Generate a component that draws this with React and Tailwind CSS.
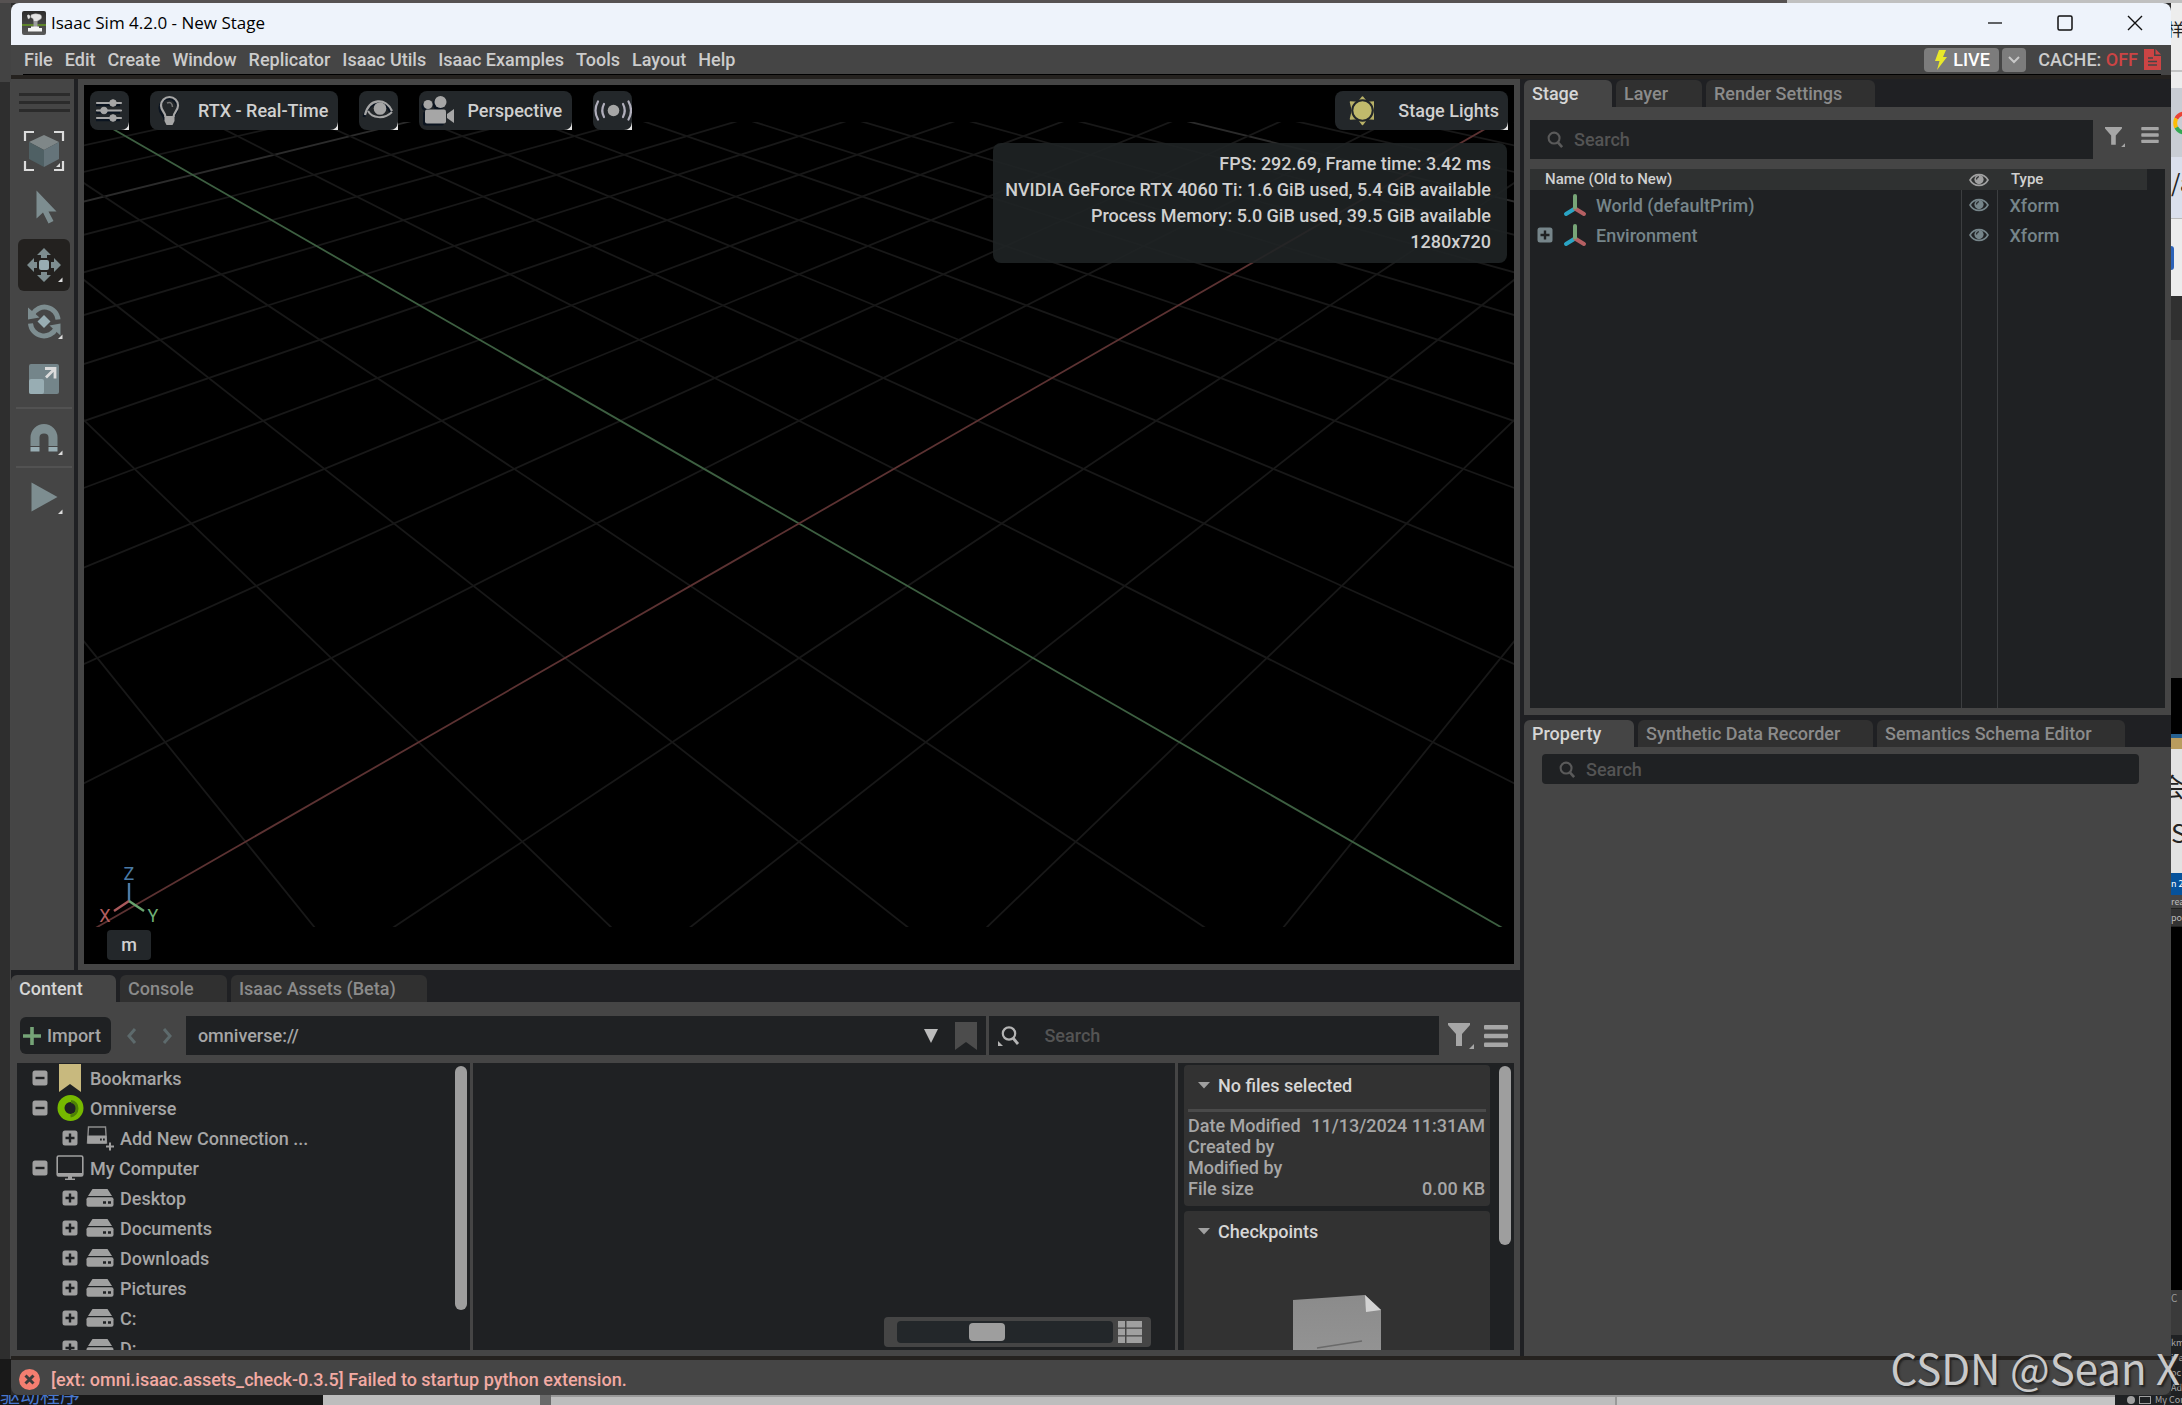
import clsx from 'clsx'

const MENUS = ['File', 'Edit', 'Create', 'Window', 'Replicator', 'Isaac Utils', 'Isaac Examples', 'Tools', 'Layout', 'Help']

const TREE = [
  { label: 'Bookmarks', icon: 'bookmark', open: true },
  { label: 'Omniverse', icon: 'omniverse', open: true },
  { label: 'Add New Connection ...', icon: 'connection', child: true },
  { label: 'My Computer', icon: 'computer', open: true },
  { label: 'Desktop', icon: 'drive', child: true },
  { label: 'Documents', icon: 'drive', child: true },
  { label: 'Downloads', icon: 'drive', child: true },
  { label: 'Pictures', icon: 'drive', child: true },
  { label: 'C:', icon: 'drive', child: true },
  { label: 'D:', icon: 'drive', child: true },
]

const FILE_INFO = [
  ['Date Modified', '11/13/2024 11:31AM'],
  ['Created by', ''],
  ['Modified by', ''],
  ['File size', '0.00 KB'],
]

const STATS = [
  'FPS: 292.69, Frame time: 3.42 ms',
  'NVIDIA GeForce RTX 4060 Ti: 1.6 GiB used, 5.4 GiB available',
  'Process Memory: 5.0 GiB used, 39.5 GiB available',
  '1280x720',
]

/* ---------- icons ---------- */

function AppIcon() {
  return (
    <svg className="h-6 w-6 shrink-0" viewBox="0 0 24 24">
      <defs>
        <linearGradient id="app" x1="0" y1="0" x2="0" y2="1">
          <stop offset="0" stopColor="#2c2c2c" />
          <stop offset="1" stopColor="#5a5a5a" />
        </linearGradient>
      </defs>
      <rect width="24" height="24" rx="2" fill="url(#app)" />
      <path d="M0 14h24" stroke="#6fae1a" strokeWidth="1.200" />
      <path d="M5 4.500q2-1.500 3 .5t-2 3M9 4q4-2 9-.5c2 1 2 4 0 5l-2 1-1 1h-3l-1-3-2-1z" fill="#e4e4e4" stroke="#bbb" strokeWidth=".5" />
      <path d="M11.500 10h4v6h-4z" fill="#9d9d9d" />
      <path d="M6 17h14v3.500H6zM9 15.500h8V17H9z" fill="#f4f4f4" />
    </svg>
  )
}

function SearchIcon({ className }) {
  return (
    <svg className={className} viewBox="0 0 18 18" fill="none" stroke="currentColor" strokeWidth="2.200">
      <circle cx="7.500" cy="7.500" r="5.800" />
      <path d="M11.500 12l4.500 5" strokeWidth="2.800" />
    </svg>
  )
}

function FilterIcon({ className }) {
  return (
    <svg className={className} viewBox="0 0 26 26" fill="currentColor">
      <path d="M0 0h22v2l-8 9v12H8V11L0 2z" />
      <path d="M26 21v5h-5z" />
    </svg>
  )
}

function ListIcon({ className }) {
  return (
    <svg className={className} viewBox="0 0 24 22" fill="currentColor">
      <rect width="24" height="4.500" rx="1" />
      <rect y="8.750" width="24" height="4.500" rx="1" />
      <rect y="17.500" width="24" height="4.500" rx="1" />
    </svg>
  )
}

function EyeIcon() {
  return (
    <svg className="mx-auto h-4 w-5" viewBox="0 0 20 16">
      <path d="M1 8C5 .8 15 .8 19 8c-4 7.200-14 7.200-18 0z" fill="none" stroke="currentColor" strokeWidth="1.600" />
      <circle cx="10" cy="7.600" r="4.600" fill="currentColor" />
      <path d="M7.600 7.400q0-2.400 2.400-2.600" stroke="#1f2123" strokeWidth="1.100" fill="none" />
    </svg>
  )
}

function XformIcon() {
  return (
    <svg className="h-6 w-6 shrink-0" viewBox="0 0 24 24" fill="none" strokeWidth="4" strokeLinecap="round">
      <path d="M12 15.500l-9 5.500" stroke="#2aa4c4" />
      <path d="M12 15.500l9 5.500" stroke="#b56063" />
      <path d="M12 14.500V3" stroke="#77a577" />
    </svg>
  )
}

function ExpandIcon({ open, className }) {
  return (
    <svg className={clsx('h-4 w-4 shrink-0', className)} viewBox="0 0 16 16">
      <rect x=".5" y=".5" width="15" height="15" rx="2.500" fill="currentColor" />
      <path d={open ? 'M3.500 8h9' : 'M3.500 8h9M8 3.500v9'} stroke="#1f2123" strokeWidth="2.400" />
    </svg>
  )
}

function TreeIcon({ name }) {
  if (name === 'bookmark') {
    return (
      <svg className="h-7 w-7 shrink-0" viewBox="0 0 28 28">
        <path d="M3 0h22v28l-11-8-11 8z" fill="#c8b97e" />
      </svg>
    )
  }
  if (name === 'omniverse') {
    return (
      <svg className="h-7 w-7 shrink-0" viewBox="0 0 28 28" fill="none">
        <circle cx="14.500" cy="14" r="9.500" stroke="#76b900" strokeWidth="7" />
        <path d="M15 7.500a6.500 6.500 0 0 1 6 7c0 4-3 7-6.500 7.500" stroke="#4c7f06" strokeWidth="3" />
      </svg>
    )
  }
  if (name === 'connection') {
    return (
      <svg className="h-7 w-7 shrink-0" viewBox="0 0 28 28">
        <path d="M2.500 3h17l1 16h-19z" fill="none" stroke="#8d8d8d" strokeWidth="1.400" />
        <rect x="1.500" y="11.500" width="19" height="8" rx="1" fill="#a0a0a0" />
        <path d="M14 15.500h1.800M17 15.500h1.800" stroke="#1f2123" strokeWidth="2" />
        <path d="M20 22.500h8M24 18.500v8" stroke="#a0a0a0" strokeWidth="2" />
      </svg>
    )
  }
  if (name === 'computer') {
    return (
      <svg className="h-7 w-7 shrink-0" viewBox="0 0 28 28">
        <rect x="1.200" y="2" width="25.600" height="20" rx="1.500" fill="none" stroke="#a0a0a0" strokeWidth="1.600" />
        <path d="M1 19h26v3H1z" fill="#a0a0a0" />
        <path d="M12 22h4v2.500h3V26H9v-1.500h3z" fill="#a0a0a0" />
      </svg>
    )
  }
  return (
    <svg className="h-7 w-7 shrink-0" viewBox="0 0 28 28" fill="#a0a0a0">
      <path d="M6.500 5h15l4.500 7H2z" />
      <rect x=".5" y="13.200" width="27" height="9.500" rx="2" />
      <path d="M17 17.200h3v2.600h-3zM22 17.200h3v2.600h-3z" fill="#1f2123" />
    </svg>
  )
}

function Corner() {
  return (
    <svg className="absolute right-0 bottom-0 h-2 w-2" viewBox="0 0 8 8">
      <path d="M8 0v8H0q7 0 8-8z" fill="#e2e2e2" />
    </svg>
  )
}

/* ---------- left tool bar ---------- */

function Tool({ label, active, notch, children }) {
  return (
    <button type="button" aria-label={label} className="flex h-[57px] w-full items-center justify-center">
      <span className={clsx('flex h-[52px] w-[52px] items-center justify-center rounded-md', active && 'bg-[#23211f]')}>
        <svg className="h-[52px] w-[52px]" viewBox="0 0 52 52">
          {children}
          {notch && <path d="M44.500 38.500v4.500h-4.500z" fill="#dcdcdc" />}
        </svg>
      </span>
    </button>
  )
}

function ToolBar() {
  return (
    <div className="flex w-[63px] shrink-0 flex-col items-center bg-[#454545] pt-3.5 pl-[3px]">
      <div className="mb-3 flex w-[51px] flex-col gap-[5px]">
        <div className="h-[3px] bg-[#2b2b2b]" />
        <div className="h-[3px] bg-[#2b2b2b]" />
        <div className="h-[3px] bg-[#2b2b2b]" />
      </div>
      <div className="-mt-0.5 w-full">
        <Tool label="Select mode">
          <g fill="none" stroke="#dcdcdc" strokeWidth="2.200">
            <path d="M7 16V7h9M36 7h9v9M16 45H7v-9M36 45h9v-9" />
          </g>
          <path d="M26 10l15 7-15 8-15-8z" fill="#7f8788" />
          <path d="M11 17l15 8v17l-15-8z" fill="#4f6064" />
          <path d="M41 17l-15 8v17l15-8z" fill="#65747a" />
          <path d="M42 38v4h-4z" fill="#dcdcdc" />
        </Tool>
        <Tool label="Select">
          <path d="M18.500 8.500v28l6.500-6 5.500 11 5-2.500-5-9.500h8z" fill="#7d8d90" />
        </Tool>
        <Tool label="Move" active notch>
          <rect x="21" y="21" width="10" height="10" rx="2" fill="#98adb3" />
          <g fill="#7d8d90">
            <path d="M26 9l7 7h-4v3h-6v-3h-4z" />
            <path d="M26 43l7-7h-4v-3h-6v3h-4z" />
            <path d="M9 26l7-7v4h3v6h-3v4z" />
            <path d="M43 26l-7-7v4h-3v6h3v4z" />
          </g>
        </Tool>
        <Tool label="Rotate" notch>
          <path d="M26 19l6.500 6.500-6.500 6.500-6.500-6.500z" fill="#98adb3" />
          <path d="M14.500 18.500a13.500 13.500 0 0 1 25.500 5" fill="none" stroke="#7d8d90" strokeWidth="5" />
          <path d="M38 32.500a13.500 13.500 0 0 1-25.500-5" fill="none" stroke="#7d8d90" strokeWidth="5" />
          <path d="M10 11.500v12l11.500-2zM42.500 27.500v12l-11-10z" fill="#7d8d90" />
        </Tool>
        <Tool label="Scale">
          <rect x="11" y="11" width="30" height="30" rx="2" fill="#74858a" />
          <rect x="11" y="26" width="15" height="15" rx="2" fill="#98adb3" />
          <path d="M27 15.500h10v10M37 15.500l-9 9" fill="none" stroke="#dcdcdc" strokeWidth="2.800" />
        </Tool>
        <div className="mx-auto h-0.5 w-14 bg-[#525252]" />
        <Tool label="Snap" notch>
          <path d="M12.500 34V25.500a13.500 13.500 0 0 1 27 0V34h-9v-8.500q0-4-4.500-4t-4.500 4V34z" fill="#7d8d90" />
          <path d="M12.500 35h9v4.500h-9zM30.500 35h9v4.500h-9z" fill="#98adb3" />
        </Tool>
        <div className="mx-auto h-0.5 w-14 bg-[#525252]" />
        <Tool label="Play" notch>
          <path d="M13.500 11.500v29l26-14.500z" fill="#7d8d90" />
        </Tool>
      </div>
    </div>
  )
}

/* ---------- viewport ---------- */

// Ground plane projection: u and v are the red and green axes in grid units.
function project(u, v) {
  const s = (u + v) / 2
  const t = (u - v) / 2
  const depth = 7.46 - s
  return [715 + (1511 * t) / depth, -467.6 + 6482 / depth]
}

function GroundGrid() {
  const lines = []
  for (let n = -26; n <= 18; n++) {
    if (n === 0) continue
    lines.push({ n, a: project(n, -30), b: project(n, 9 - n) })
    lines.push({ n, a: project(-30, n), b: project(9 - n, n) })
  }
  const axisU = [project(-30, 0), project(9, 0)]
  const axisV = [project(0, -30), project(0, 9)]

  return (
    <svg className="aspect-video w-full" viewBox="0 0 1430 804">
      {lines.map(({ n, a, b }, i) => (
        <line
          key={i}
          x1={a[0]}
          y1={a[1]}
          x2={b[0]}
          y2={b[1]}
          stroke={n % 10 === 0 ? '#2b2b2b' : '#181818'}
          strokeWidth="1.800"
        />
      ))}
      <line x1={axisU[0][0]} y1={axisU[0][1]} x2={axisU[1][0]} y2={axisU[1][1]} stroke="#3d5f41" strokeWidth="1.800" />
      <line x1={axisV[0][0]} y1={axisV[0][1]} x2={axisV[1][0]} y2={axisV[1][1]} stroke="#5c3232" strokeWidth="1.800" />
    </svg>
  )
}

function ViewButton({ label, text, className, children }) {
  return (
    <button
      type="button"
      aria-label={label}
      className={clsx('relative flex h-[39px] items-center rounded-lg bg-[#23272a] text-[18px] font-medium text-[#d0d0d0]', className)}
    >
      <svg className="h-[39px] w-[39px] shrink-0" viewBox="0 0 39 39">
        {children}
      </svg>
      {text}
      <Corner />
    </button>
  )
}

function Viewport() {
  return (
    <div className="relative flex min-h-0 flex-1 flex-col justify-center overflow-hidden bg-black">
      <GroundGrid />

      <div className="absolute inset-x-1.5 top-1.5 flex items-start">
        <ViewButton label="Viewport settings">
          <g stroke="#0b1420" strokeWidth="2.500" transform="translate(-1 2)">
            <path d="M7 12h24M7 19.500h24M7 27h24" />
          </g>
          <g fill="#a6a6a6" stroke="#a6a6a6">
            <path d="M7 12h24M7 19.500h24M7 27h24" strokeWidth="2.200" strokeLinecap="round" />
            <circle cx="23" cy="12" r="3.300" />
            <circle cx="14" cy="19.500" r="3.300" />
            <circle cx="23" cy="27" r="3.300" />
          </g>
        </ViewButton>
        <ViewButton label="Renderer" text="RTX - Real-Time" className="ml-[21px] gap-[9px] pr-2.5">
          <path d="M14 27c0-5-5-6-5-12a9 9 0 0 1 18 0c0 6-5 7-5 12" transform="translate(.5 2)" fill="none" stroke="#0b1420" strokeWidth="2.200" />
          <path d="M15.500 26c0-5-4.500-6-4.500-11.500a8.500 8.500 0 0 1 17 0c0 5.500-4.500 6.500-4.500 11.500" fill="none" stroke="#a6a6a6" strokeWidth="2.200" />
          <path d="M14.500 25h10v5l-2 4h-6l-2-4z" fill="#a6a6a6" />
          <path d="M17 12q5-2 5.500 4" fill="none" stroke="#777" strokeWidth="1.500" />
        </ViewButton>
        <ViewButton label="Show by type" className="ml-[21px]">
          <path d="M5 26C9 9 26 9 32 21" fill="none" stroke="#0b1420" strokeWidth="3" />
          <circle cx="21" cy="17.500" r="6.300" fill="#a6a6a6" />
          <path d="M6 24C10 7 27 6 33 20" fill="none" stroke="#a6a6a6" strokeWidth="2.200" />
          <path d="M9 20c4 7 16 9 24 1" fill="none" stroke="#a6a6a6" strokeWidth="2" />
        </ViewButton>
        <ViewButton label="Camera" text="Perspective" className="ml-[21px] gap-[9px] pr-2.5">
          <g fill="#0b1420" transform="translate(-2 2)">
            <circle cx="9" cy="13.500" r="4.600" />
            <circle cx="21.500" cy="11" r="6" />
            <rect x="6" y="18.500" width="21" height="14" rx="2" />
          </g>
          <g fill="#a6a6a6">
            <circle cx="9" cy="13.500" r="4.600" />
            <circle cx="21.500" cy="11" r="6" />
            <rect x="6" y="18.500" width="21" height="14" rx="2" />
            <path d="M35 18v14l-7-5v-4z" />
          </g>
        </ViewButton>
        <ViewButton label="Sensors" className="ml-[21px]">
          <circle cx="20.500" cy="19.500" r="5.800" fill="#a6a6a6" />
          <g fill="none" stroke="#b0aebb" strokeWidth="2.200" strokeLinecap="round">
            <path d="M11 13q-3.500 6.500 0 13M30 13q3.500 6.500 0 13" />
            <path d="M5 10.500q-5 9 0 18M35.500 10.500q5 9 0 18" />
          </g>
        </ViewButton>
        <ViewButton label="Lighting" text="Stage Lights" className="ml-auto gap-[24px] pr-[9px]">
          <path
            d="M27.500 6l4.500 5.500 7.500-.5-2 8.500 2 8.500-7.500-.5-4.500 6-4.500-6-7.500.5 2-8.500-2-8.500 7.500.5z"
            fill="#b9b268"
            stroke="#b9b268"
            strokeWidth="1.500"
            strokeLinejoin="round"
          />
          <circle cx="27.500" cy="19.500" r="10.200" fill="#c1ba6c" stroke="#23272a" strokeWidth="2" />
        </ViewButton>
      </div>

      <div className="absolute top-[58px] right-[7px] rounded-lg bg-[#1f2325]/90 py-2 pr-4 pl-3 text-right text-[18px] leading-[26px] font-medium text-[#d0d0d0]">
        {STATS.map((line) => (
          <div key={line}>{line}</div>
        ))}
      </div>

      <div className="absolute bottom-1 left-[11px] flex w-[68px] flex-col items-center">
        <svg className="h-[66px] w-[68px] overflow-visible font-['Roboto',sans-serif] text-[18px]" viewBox="0 0 68 66">
          <path d="M34 38V19" stroke="#4a7aa5" strokeWidth="2.400" />
          <path d="M34 37l-15 10" stroke="#a9595b" strokeWidth="2.400" />
          <path d="M34 37l15 10" stroke="#69a36d" strokeWidth="2.400" />
          <text x="34" y="16" textAnchor="middle" fill="#4a7aa5">Z</text>
          <text x="10" y="58" textAnchor="middle" fill="#b25d5e">X</text>
          <text x="58" y="58" textAnchor="middle" fill="#6fae74">Y</text>
        </svg>
        <button type="button" className="h-[30px] w-11 rounded bg-[#23272a] text-[18px] leading-[30px] font-medium text-[#d0d0d0]">
          m
        </button>
      </div>
    </div>
  )
}

/* ---------- shared ---------- */

function Tabs({ items, className = 'h-8' }) {
  return (
    <div role="tablist" className={clsx('flex shrink-0 items-end gap-1 bg-[#1f2023]', className)}>
      {items.map(([label, width], i) => (
        <button
          key={label}
          type="button"
          role="tab"
          aria-selected={i === 0}
          className={clsx(
            'h-[27px] rounded-t-md pl-2 text-left text-[18px] leading-[28px] font-medium whitespace-nowrap',
            width,
            i === 0 ? 'bg-[#454545] text-[#d6d6d6]' : 'bg-[#303030] text-[#8b8b8b]',
          )}
        >
          {label}
        </button>
      ))}
    </div>
  )
}

/* ---------- content browser ---------- */

function TreeRow({ item }) {
  return (
    <li className={clsx('flex h-[30px] shrink-0 items-center', item.child ? 'pl-[45px]' : 'pl-[15px]')}>
      <button type="button" aria-label={item.open ? 'Collapse' : 'Expand'} className="text-[#a0a0a0]">
        <ExpandIcon open={item.open} />
      </button>
      <span className="ml-2 flex items-center gap-1.5">
        <TreeIcon name={item.icon} />
        {item.label}
      </span>
    </li>
  )
}

function Fold({ title, className, children }) {
  return (
    <section className={clsx('rounded bg-[#323232] px-1', className)}>
      <button type="button" className="flex h-10 items-center gap-[7px] pl-[9px] text-[18px] font-medium text-[#d6d6d6]">
        <svg className="h-2 w-3.5" viewBox="0 0 14 8">
          <path d="M1 1h12L7 7.500z" fill="#a0a0a0" />
        </svg>
        {title}
      </button>
      {children}
    </section>
  )
}

function ContentBrowser() {
  return (
    <section className="flex h-[386px] shrink-0 flex-col bg-[#454545]">
      <Tabs items={[['Content', 'w-[105px]'], ['Console', 'w-[107px]'], ['Isaac Assets (Beta)', 'w-[196px]']]} />

      <div className="flex h-[61px] shrink-0 items-center pr-3 pb-2 pl-[9px] pt-3.5 text-[18px] font-medium">
        <button type="button" className="flex h-[37px] items-center gap-1.5 rounded-md bg-[#1f2123] pr-2.5 pl-[3px] text-[#a6a6a6]">
          <svg className="h-[18px] w-[18px]" viewBox="0 0 18 18">
            <path d="M9 0v18M0 9h18" stroke="#75a477" strokeWidth="3.600" />
          </svg>
          Import
        </button>
        {['M8 1L2 8l6 7', 'M2 1l6 7-6 7'].map((d, i) => (
          <button key={d} type="button" aria-label={i ? 'Forward' : 'Back'} className={i ? 'ml-[25px]' : 'ml-4'}>
            <svg className="h-4 w-2.5" viewBox="0 0 10 16">
              <path d={d} fill="none" stroke="#5d6a6c" strokeWidth="3" />
            </svg>
          </button>
        ))}

        <div className="ml-3.5 flex h-[39px] flex-[798] items-center bg-[#1f2123] pr-[9px] pl-3">
          <input
            aria-label="Path"
            defaultValue="omniverse://"
            className="min-w-0 flex-1 bg-transparent text-[18px] text-[#a6a6a6] outline-none"
          />
          <button type="button" aria-label="Recent paths">
            <svg className="h-3.5 w-4" viewBox="0 0 16 14">
              <path d="M1 0h14L8 14z" fill="#bcbcbc" />
            </svg>
          </button>
          <button type="button" aria-label="Bookmark" className="ml-4">
            <svg className="h-7 w-[22px]" viewBox="0 0 22 28">
              <path d="M0 0h22v28l-11-8-11 8z" fill="#4c4c4c" />
            </svg>
          </button>
        </div>

        <label className="ml-[3px] flex h-[39px] flex-[451] items-center bg-[#1f2123] pl-[9px]">
          <svg className="h-5 w-[22px]" viewBox="0 0 22 20">
            <g fill="none" stroke="#b4b4b4" strokeWidth="2.200">
              <circle cx="11" cy="7.500" r="6.200" />
              <path d="M15 12l5 6" strokeWidth="2.800" />
            </g>
            <path d="M0 15v5h5z" fill="#b4b4b4" />
          </svg>
          <span className="sr-only">Search files</span>
          <input placeholder="Search" className="ml-6 min-w-0 flex-1 bg-transparent text-[18px] outline-none placeholder:text-[#545454]" />
        </label>

        <button type="button" aria-label="Filter" className="ml-[9px] text-[#a6a6a6]">
          <FilterIcon className="h-[26px] w-[26px]" />
        </button>
        <button type="button" aria-label="Options" className="ml-2.5 text-[#a6a6a6]">
          <ListIcon className="h-[22px] w-6" />
        </button>
      </div>

      <div className="mx-1.5 mb-1.5 flex min-h-0 flex-1 gap-[3px] text-[18px] font-medium text-[#a6a6a6]">
        <div className="flex w-[453px] shrink-0 overflow-hidden bg-[#1f2123]">
          <ul className="flex-1">
            {TREE.map((item) => (
              <TreeRow key={item.label} item={item} />
            ))}
          </ul>
          <div className="mt-[3px] mr-[3px] h-[244px] w-3 rounded-full bg-[#9e9e9e]" />
        </div>

        <div className="flex min-w-0 flex-1 items-end justify-end bg-[#1f2123] pr-6 pb-[3px]">
          <div className="flex h-[30px] items-center gap-[5px] rounded bg-[#454545] pr-[9px] pl-[13px]">
            <input
              type="range"
              aria-label="Thumbnail size"
              min="0"
              max="100"
              defaultValue="40"
              className="h-[22px] w-[216px] appearance-none rounded bg-[#23272a] [&::-webkit-slider-thumb]:h-[18px] [&::-webkit-slider-thumb]:w-9 [&::-webkit-slider-thumb]:appearance-none [&::-webkit-slider-thumb]:rounded [&::-webkit-slider-thumb]:bg-[#9e9e9e]"
            />
            <button type="button" aria-label="List view">
              <svg className="h-[22px] w-6" viewBox="0 0 24 22" fill="#a0a0a0">
                <path d="M0 0h7v6.500H0zM8.500 0H24v6.500H8.500zM0 7.800h7v6.500H0zM8.500 7.800H24v6.500H8.500zM0 15.600h7V22H0zM8.500 15.600H24V22H8.500z" />
              </svg>
            </button>
          </div>
        </div>

        <div className="flex w-[336px] shrink-0 overflow-hidden bg-[#1f2123] pt-0.5 pl-1.5">
          <div className="flex w-[306px] flex-col gap-[5px]">
            <Fold title="No files selected" className="h-[141px] shrink-0">
              <div className="mt-1 mb-[3px] h-[3px] bg-[#4a4a4a]" />
              <dl className="pr-[1px] leading-[21px]">
                {FILE_INFO.map(([k, v]) => (
                  <div key={k} className="flex justify-between">
                    <dt>{k}</dt>
                    <dd>{v}</dd>
                  </div>
                ))}
              </dl>
            </Fold>
            <Fold title="Checkpoints" className="h-[200px] shrink-0">
              <svg className="mx-auto mt-11 h-[100px] w-[90px]" viewBox="0 0 90 100">
                <defs>
                  <linearGradient id="sheet" x1="0" y1="0" x2="0" y2="1">
                    <stop offset="0" stopColor="#8b8b8b" />
                    <stop offset="1" stopColor="#999" />
                  </linearGradient>
                </defs>
                <path d="M1 5L73 0l16 15v85H1z" fill="url(#sheet)" />
                <path d="M73 0l16 15-15 2z" fill="#d2d2d2" />
                <path d="M25 53l45-7M25 63l45-7" stroke="#6a6a6a" strokeWidth="1.500" />
              </svg>
            </Fold>
          </div>
          <div className="mt-px mr-[3px] ml-auto h-[179px] w-3 rounded-full bg-[#9e9e9e]" />
        </div>
      </div>
    </section>
  )
}

/* ---------- right column ---------- */

function StagePanel() {
  return (
    <section className="flex min-h-0 flex-1 flex-col bg-[#454545]">
      <Tabs className="h-7" items={[['Stage', 'w-[88px]'], ['Layer', 'w-[86px]'], ['Render Settings', 'w-[169px]']]} />
      <div className="mt-[13px] flex items-start pr-3 pl-1.5 text-[#a6a6a6]">
        <label className="flex h-[39px] flex-1 items-center gap-2.5 bg-[#1f2123] pl-[17px] text-[#5a5a5a]">
          <SearchIcon className="h-[17px] w-[17px]" />
          <span className="sr-only">Search stage</span>
          <input placeholder="Search" className="min-w-0 flex-1 bg-transparent text-[18px] font-medium outline-none placeholder:text-[#545454]" />
        </label>
        <button type="button" aria-label="Filter" className="mt-[7px] ml-3">
          <FilterIcon className="h-5 w-5" />
        </button>
        <button type="button" aria-label="Options" className="mt-[7px] ml-4">
          <ListIcon className="h-4 w-[18px]" />
        </button>
      </div>
      <div className="mx-1.5 mt-2.5 mb-[7px] min-h-0 flex-1 bg-[#1f2123] pr-[18px]">
        <table className="h-full w-full table-fixed border-collapse text-[18px] font-medium text-[#76858a]">
          <colgroup>
            <col />
            <col className="w-9" />
            <col className="w-[150px]" />
          </colgroup>
          <thead>
            <tr className="h-[21px] bg-[#2f3131] text-left text-[15px] leading-[21px] text-[#d0d0d0]">
              <th className="pl-[15px] font-medium">Name (Old to New)</th>
              <th className="text-[#a0a0a0]" aria-label="Visibility">
                <EyeIcon />
              </th>
              <th className="pl-3.5 font-medium">Type</th>
            </tr>
          </thead>
          <tbody>
            {['World (defaultPrim)', 'Environment'].map((name, i) => (
              <tr key={name} className="h-[30px]">
                <td className="border-r border-[#3c3e40]">
                  <div className="flex items-center pl-[7px]">
                    <ExpandIcon className={i === 0 && 'invisible'} />
                    <span className="ml-2.5 flex items-center gap-[9px]">
                      <XformIcon />
                      {name}
                    </span>
                  </div>
                </td>
                <td className="border-r border-[#3c3e40]">
                  <EyeIcon />
                </td>
                <td className="pl-3">Xform</td>
              </tr>
            ))}
            <tr>
              <td className="border-r border-[#3c3e40]" />
              <td className="border-r border-[#3c3e40]" />
              <td />
            </tr>
          </tbody>
        </table>
      </div>
    </section>
  )
}

function PropertyPanel() {
  return (
    <section className="h-[641px] shrink-0 bg-[#454545]">
      <Tabs
        items={[
          ['Property', 'w-[110px]'],
          ['Synthetic Data Recorder', 'w-[235px]'],
          ['Semantics Schema Editor', 'w-[248px]'],
        ]}
      />
      <label className="mt-[7px] mr-8 ml-[18px] flex h-[30px] items-center gap-2.5 rounded-sm bg-[#1f2123] pl-[17px] text-[#5a5a5a]">
        <SearchIcon className="h-[17px] w-[17px]" />
        <span className="sr-only">Search properties</span>
        <input placeholder="Search" className="min-w-0 flex-1 bg-transparent text-[18px] font-medium outline-none placeholder:text-[#545454]" />
      </label>
    </section>
  )
}

/* ---------- window chrome ---------- */

function TitleBar() {
  return (
    <header className="flex h-[42px] shrink-0 items-center rounded-t-lg bg-[#eef3fb] pr-7 pb-[3px] pl-[11px] font-['Open_Sans',sans-serif] text-[17px] text-black">
      <AppIcon />
      <h1 className="ml-[5px] flex-1">Isaac Sim 4.2.0 - New Stage</h1>
      <div className="flex items-center gap-[54px]">
        <button type="button" aria-label="Minimize">
          <svg className="h-4 w-4" viewBox="0 0 16 16">
            <path d="M1 8h14" stroke="#111" strokeWidth="1.300" />
          </svg>
        </button>
        <button type="button" aria-label="Maximize">
          <svg className="h-4 w-4" viewBox="0 0 16 16">
            <rect x="1" y="1" width="14" height="14" rx="1.500" fill="none" stroke="#111" strokeWidth="1.500" />
          </svg>
        </button>
        <button type="button" aria-label="Close">
          <svg className="h-4 w-4" viewBox="0 0 16 16">
            <path d="M1 1l14 14M15 1L1 15" stroke="#111" strokeWidth="1.400" />
          </svg>
        </button>
      </div>
    </header>
  )
}

function MenuBar() {
  return (
    <nav className="flex h-[34px] shrink-0 items-start border-b-4 border-[#25221f] bg-[#454545] pr-2.5 pl-3 text-[18px] font-medium text-[#cccccc]">
      <div className="flex h-[30px] flex-1 items-center gap-3 border-b border-black pl-px">
        {MENUS.map((m) => (
          <button key={m} type="button" className="leading-[29px]">
            {m}
          </button>
        ))}
      </div>
      <div className="flex h-[30px] items-center border-b border-black">
        <button type="button" className="flex h-6 w-[75px] items-center gap-[5px] rounded bg-[#7c7c7c] pl-2.5 leading-6 text-white">
          <svg className="h-5 w-3.5" viewBox="0 0 14 20">
            <path d="M5 0h7L9 7h4L3 20l2.500-9H1z" fill="#e8e82a" />
          </svg>
          LIVE
        </button>
        <button type="button" aria-label="Live options" className="ml-[3px] flex h-6 w-6 items-center justify-center rounded bg-[#7c7c7c]">
          <svg className="h-2 w-3" viewBox="0 0 12 8">
            <path d="M1 1l5 5 5-5" fill="none" stroke="#c8c8c8" strokeWidth="2" />
          </svg>
        </button>
        <span className="ml-3">
          CACHE: <span className="text-[#cc4444]">OFF</span>
        </span>
        <svg className="ml-1.5 h-[21px] w-[17px]" viewBox="0 0 17 21">
          <path d="M0 0h10v7h7v14H0z" fill="#cc4444" />
          <path d="M11.500 0L17 5.500h-5.500z" fill="#cc4444" />
          <path d="M4 9h5M4 12.500h9M4 16h9" stroke="#454545" strokeWidth="1.600" />
        </svg>
      </div>
    </nav>
  )
}

function StatusBar() {
  return (
    <footer className="flex h-[39px] shrink-0 items-center gap-[11px] rounded-b-lg border-t-4 border-[#25221f] bg-[#454545] pt-1 pl-2 text-[18px] font-medium text-[#f2aaa3]">
      <svg className="h-[21px] w-[21px]" viewBox="0 0 21 21">
        <circle cx="10.500" cy="10.500" r="10.500" fill="#f47e70" />
        <path d="M6.500 6.500l8 8M14.500 6.500l-8 8" stroke="#3c3c3c" strokeWidth="3" />
      </svg>
      [ext: omni.isaac.assets_check-0.3.5] Failed to startup python extension.
    </footer>
  )
}

/* ---------- windows behind ---------- */

function RightEdge() {
  return (
    <div className="flex w-[11px] flex-col overflow-hidden font-['Noto_Sans_CJK_SC',sans-serif] whitespace-nowrap text-[#222]">
      <div className="h-[67px] bg-[#ededed] pt-3 text-[17px] leading-[28px]">
        <span className="-ml-1">样式</span>
      </div>
      <div className="h-[18px] border-t-2 border-[#c4c4c4] bg-[#ededed]" />
      <div className="flex h-[69px] items-center bg-[#c9cdd4] pl-0.5">
        <svg className="h-6 w-6 shrink-0" viewBox="0 0 24 24" fill="none" strokeWidth="4">
          <path d="M3.300 7.500A10 10 0 0 1 12 2.500" stroke="#ea4335" />
          <path d="M3.300 16.500a10 10 0 0 1 0-9" stroke="#fbbc05" />
          <path d="M12 21.500a10 10 0 0 1-8.700-5" stroke="#34a853" />
        </svg>
      </div>
      <div className="h-[61px] bg-[#dadfec] text-[24px] leading-[50px]">/a</div>
      <div className="flex h-[78px] items-center border-t border-[#bbb] bg-[#ececec]">
        <div className="h-6 w-[3px] rounded-r-full bg-[#2b62b8]" />
      </div>
      <div className="h-[44px] bg-[#303030]" />
      <div className="h-[338px] bg-[#404040]" />
      <div className="h-[56px] bg-black" />
      <div className="h-[15px] border-t-4 border-[#26608f] bg-[#b99c5e]" />
      <div className="h-[124px] bg-[#e2e2e2] pt-3.5 text-[26px] leading-[46px]">
        <div className="-ml-3">会议</div>
        <div>S</div>
      </div>
      <div className="h-[22px] bg-[#06529b] text-[9px] leading-[22px] text-white">n 2</div>
      <div className="h-[13px] bg-[#444] text-[9px] leading-[13px] text-[#bbb]">reate</div>
      <div className="h-[19px] border-y border-[#222] bg-[#333] text-[9px] leading-[17px] text-[#bbb]">port</div>
      <div className="min-h-0 flex-1 bg-black" />
      <div className="h-[45px] bg-[#3a3a3a] text-[10px] leading-4 text-[#999]">C</div>
      <div className="h-[60px] bg-[#1f2123] text-[9px] leading-[15px] text-[#aaa]">
        <div>km</div>
        <div>ive</div>
        <div>oc</div>
        <div>Add</div>
      </div>
    </div>
  )
}

function BottomEdge() {
  return (
    <div className="flex h-2.5 overflow-hidden bg-[#bdbdbd] font-['Noto_Sans_CJK_SC',sans-serif] whitespace-nowrap">
      <div className="flex w-[323px] items-end bg-[#171717] text-[20px] leading-5 text-[#4878d0]">
        <span>驱动程序</span>
      </div>
      <div className="w-[217px]" />
      <div className="w-[11px] bg-[#6a6a6a]" />
      <div className="flex-1 border-t-2 border-[#999]" />
      <div className="w-[500px] border-t-2 border-l-2 border-[#999] bg-[#c4c4c4]" />
      <div className="flex w-[67px] items-center gap-1 bg-[#1f2123] pl-3 text-[9px] leading-[10px] text-[#aaa]">
        <span className="h-2 w-2 shrink-0 rounded-sm bg-[#a0a0a0]" />
        <span className="h-2 w-3 shrink-0 border border-[#a0a0a0]" />
        My Computer
      </div>
    </div>
  )
}

export default function App() {
  return (
    <div className="relative flex h-screen flex-col overflow-hidden bg-[#2c2c2c] font-['Roboto',sans-serif]">
      <div className="flex h-[3px] shrink-0">
        <div className="flex-[1787] bg-[#565252]" />
        <div className="flex-[395] bg-[#c0c0c0]" />
      </div>
      <div className="flex min-h-0 flex-1">
        <div className="flex w-[11px] shrink-0 flex-col">
          <div className="h-[79px] bg-[#434343]" />
          <div className="flex-1 border-r border-[#464646] bg-[#2e2e2e]" />
          <div className="h-9 bg-[#191919]" />
        </div>

        <main className="flex min-w-0 flex-1 flex-col">
          <TitleBar />
          <MenuBar />
          <div className="flex min-h-0 flex-1 gap-1 bg-[#1f2023]">
            <div className="flex min-w-0 flex-1 flex-col">
              <div className="flex min-h-0 flex-1 gap-1">
                <ToolBar />
                <div className="flex min-w-0 flex-1 border-6 border-[#454545]">
                  <Viewport />
                </div>
              </div>
              <ContentBrowser />
            </div>
            <div className="flex w-[647px] shrink-0 flex-col">
              <StagePanel />
              <PropertyPanel />
            </div>
          </div>
          <StatusBar />
        </main>

        <RightEdge />
      </div>
      <BottomEdge />
      <div className="pointer-events-none absolute right-0.5 bottom-3 font-['Noto_Sans_CJK_SC',sans-serif] text-[42px] leading-[52px] text-[#c9c9c9] [text-shadow:2px_2px_2px_#222]">
        CSDN @Sean X
      </div>
    </div>
  )
}
